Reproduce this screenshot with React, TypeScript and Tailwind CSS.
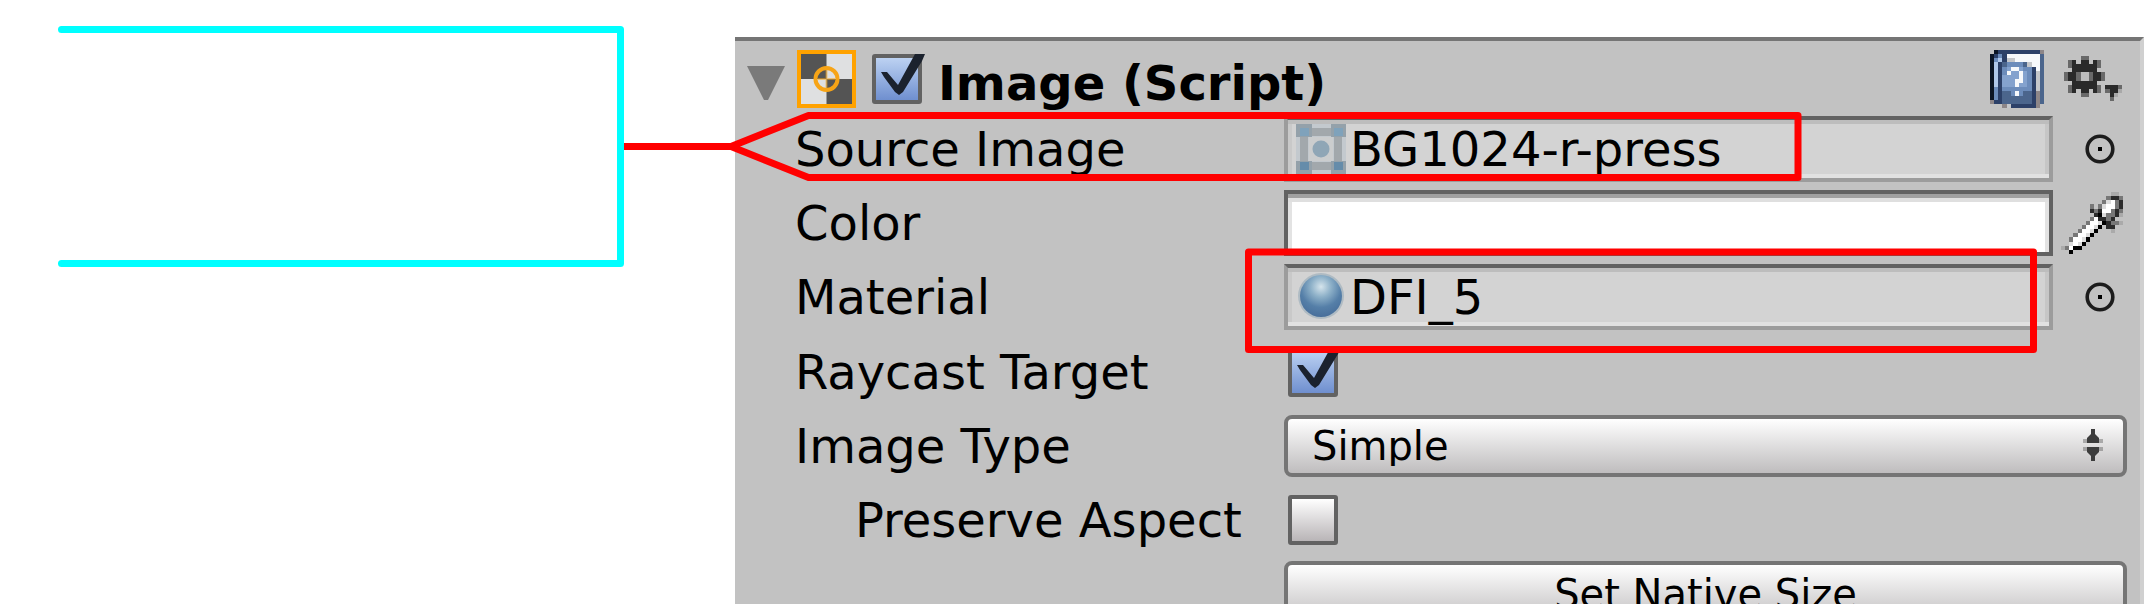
import React from 'react';

const GEAR = [
  '....mm........',
  '.md.dd.dm.....',
  '.mddddddm.....',
  '..dddddd......',
  'mddmggmddm....',
  'mddmggmddm....',
  '..dddddd......',
  '.mddddddm.dddm',
  '.md.dd.dm.mddl',
  '....mm.....dl.',
  '...........m..',
];
const GEAR_COLORS: Record<string, string> = { d: '#2a2a2a', m: '#696969', l: '#a8a8a8', g: '#bdbdbd' };

const DROPPER = [
  '............ll.',
  '...........mddm',
  '..........mgwmd',
  '.......m.mgwwmd',
  '.......dmdwwmdm',
  '........dkgmmdl',
  '.......mwddmd..',
  '......mwwgkdmml',
  '.....mwwgk.dd..',
  '....mwwgk...l..',
  '...mwwgk.......',
  '..mwwgk........',
  '..gwgk.........',
  'lmwkk..........',
  '..k............',
];
const DROPPER_COLORS: Record<string, string> = { d: '#2b2b2b', k: '#000000', m: '#777777', l: '#aaaaaa', g: '#dcdcdc', w: '#ffffff' };

const BOOK = [
  '.knnnnnnnnnnh',
  'knbnwwwwwwwwe',
  'kbcnggwwwwwwe',
  'kcnebbbbegwwe',
  'kcnblwwlbbnwe',
  'kcnbwllwlbnge',
  'kcnllllwlbnge',
  'kcnlllwwlbnge',
  'kcnlllwllbnge',
  'kbnbbbbbbbnge',
  'kbneebwbeenhe',
  'kbneeeeeeenhe',
  'hnneeeeeeenhe',
  '...hgnnnnnnh.',
];
const BOOK_COLORS: Record<string, string> = {
  k: '#0c1524',
  n: '#2c4068',
  e: '#4b658c',
  b: '#6c8cbb',
  l: '#84a2ce',
  c: '#b0c8ea',
  w: '#f6f8fb',
  g: '#c4c6ca',
  h: '#8d8688',
};

function PixelIcon({ rows, colors, className }: { rows: string[]; colors: Record<string, string>; className: string }) {
  return (
    <svg
      className={className}
      viewBox={`0 0 ${rows[0].length} ${rows.length}`}
      preserveAspectRatio="none"
      shapeRendering="crispEdges"
      aria-hidden="true"
    >
      {rows.flatMap((row, y) =>
        row
          .split('')
          .map((c, x) => (colors[c] ? <rect key={`${x}-${y}`} x={x} y={y} width="1" height="1" fill={colors[c]} /> : null)),
      )}
    </svg>
  );
}

function Checkbox({ id, label, checked }: { id: string; label?: string; checked?: boolean }) {
  return (
    <span className="relative block h-[50px] w-[50px] shrink-0">
      <input
        id={id}
        type="checkbox"
        aria-label={label}
        defaultChecked={checked}
        className="peer block h-full w-full appearance-none rounded-[3px] border-4 border-[#626262] bg-linear-to-b from-white to-[#b9b5b7] checked:from-[#bdd2f2] checked:to-[#6f8fcf]"
      />
      <svg
        className="pointer-events-none absolute inset-0 hidden overflow-visible peer-checked:block"
        viewBox="0 0 50 50"
        aria-hidden="true"
      >
        <path d="M9 18H15L26 31L43 0H53L50 7L31 38L27 41L23 38L12 23Z" fill="#1b222e" />
      </svg>
    </span>
  );
}

function TargetButton({ label }: { label: string }) {
  return (
    <button type="button" aria-label={label} className="mr-3">
      <svg className="block h-[30px] w-[30px]" viewBox="0 0 30 30" aria-hidden="true">
        <circle cx="15" cy="15" r="12.8" fill="none" stroke="#1c1c1c" strokeWidth="3.6" />
        <rect x="13" y="13" width="4" height="4" fill="#000" />
      </svg>
    </button>
  );
}

function SpriteIcon() {
  return (
    <svg className="h-[50px] w-[50px] shrink-0" viewBox="0 0 50 50" aria-hidden="true">
      <rect width="50" height="50" fill="#c3c9ce" />
      <path d="M8 4V46M42 4V46M4 8H46M4 42H46" stroke="#a2a8ac" strokeWidth="8" />
      <rect x="13" y="13" width="24" height="24" fill="#cbcdce" />
      <g fill="#94a1aa">
        <rect width="16" height="13" />
        <rect x="35" width="15" height="13" />
        <rect y="37" width="16" height="13" />
        <rect x="35" y="37" width="15" height="13" />
      </g>
      <g fill="#7fa2bb">
        <rect x="4" y="4" width="9" height="8" />
        <rect x="38" y="4" width="9" height="8" />
      </g>
      <g fill="#658caa">
        <rect x="4" y="38" width="9" height="8" />
        <rect x="38" y="38" width="9" height="8" />
      </g>
      <circle cx="25" cy="25" r="8.5" fill="#8fa6b6" />
    </svg>
  );
}

function SphereIcon() {
  return (
    <svg className="h-[50px] w-[50px] shrink-0" viewBox="0 0 50 50" aria-hidden="true">
      <defs>
        <radialGradient id="sphere" cx="0.5" cy="0.28" r="0.7">
          <stop offset="0" stopColor="#d5e4ec" />
          <stop offset="0.35" stopColor="#8db0c8" />
          <stop offset="0.7" stopColor="#557fa8" />
          <stop offset="1" stopColor="#49709c" />
        </radialGradient>
      </defs>
      <circle cx="25" cy="24" r="23" fill="#9fb0bc" opacity="0.7" />
      <circle cx="25" cy="24" r="21" fill="url(#sphere)" />
    </svg>
  );
}

function ObjectField({ id, value, icon }: { id: string; value: string; icon: React.ReactNode }) {
  return (
    <div className="flex h-[66px] items-center border-4 border-[#9c9c9c] border-t-[#626262] bg-[#d3d3d3] pl-2 shadow-[inset_0_4px_0_#bdbdbd,inset_0_-4px_0_#e1e1e1,inset_4px_0_0_#c9c9c9,inset_-4px_0_0_#c6c6c6]">
      {icon}
      <input id={id} readOnly defaultValue={value} className="ml-1 min-w-0 flex-1 bg-transparent outline-none" />
    </div>
  );
}

function Row({ id, label, indent, action, children }: {
  id: string;
  label: string;
  indent?: boolean;
  action?: React.ReactNode;
  children: React.ReactNode;
}) {
  return (
    <div className="grid h-[66px] grid-cols-[489px_1fr] items-center">
      <label htmlFor={id} className={indent ? 'pl-[60px] whitespace-nowrap' : 'whitespace-nowrap'}>
        {label}
      </label>
      <div className="flex min-w-0 items-center">
        <div className="min-w-0 flex-1">{children}</div>
        {action && <div className="flex w-[74px] justify-end">{action}</div>}
      </div>
    </div>
  );
}

function Annotations() {
  return (
    <svg
      className="pointer-events-none absolute top-0 left-0 h-[604px] w-[2144px]"
      viewBox="0 0 2144 604"
      fill="none"
      strokeLinejoin="round"
      strokeLinecap="round"
      strokeWidth="7"
      aria-hidden="true"
    >
      <g stroke="#ff0000">
        <path d="M624 146.500H731" strokeLinecap="butt" />
        <path d="M731 146.500L808.500 115.500H1798V177.500H808.500Z" />
        <path d="M1248.500 252H2033.500V349.500H1248.500Z" />
      </g>
      <path d="M61.500 29.500H620.500V263.500H61.500" stroke="#00ffff" />
    </svg>
  );
}

export default function App() {
  return (
    <main className="relative flex h-screen overflow-hidden bg-white pt-[37px] font-['DejaVu_Sans',Verdana,sans-serif] text-[48px] leading-none text-black">
      <div className="w-[735px] shrink-0" />
      <section className="min-w-0 flex-1 border-t-4 border-r-4 border-t-[#757575] border-r-[#d0d0d0] bg-[#c2c2c2]">
        <header className="flex h-[75px] items-center pr-[18px] pl-3">
          <button type="button" aria-label="Collapse component" className="mr-3 pt-2">
            <svg className="block h-[34px] w-[38px]" viewBox="0 0 38 34" aria-hidden="true">
              <path d="M0 0H38L21 34H17Z" fill="#7a7a7a" />
            </svg>
          </button>
          <svg className="mr-4 h-[58px] w-[59px]" viewBox="0 0 59 58" aria-hidden="true">
            <rect x="2" y="2" width="55" height="54" fill="#dfe0e1" />
            <path d="M4 4H29.500V29H4ZM29.500 29H55V54H29.500Z" fill="#545454" />
            <circle cx="29.500" cy="29" r="11" fill="none" stroke="#f7a416" strokeWidth="4" />
            <path d="M29.500 20V38M21 29H38" stroke="#f7a416" strokeWidth="2" opacity="0.5" />
            <rect x="2" y="2" width="55" height="54" fill="none" stroke="#ffa200" strokeWidth="4" />
          </svg>
          <Checkbox id="enabled" label="Enable Image component" checked />
          <h1 className="ml-4 flex-1 pt-2 font-bold whitespace-nowrap">Image (Script)</h1>
          <button type="button" aria-label="Open reference">
            <PixelIcon rows={BOOK} colors={BOOK_COLORS} className="block h-[58px] w-[54px]" />
          </button>
          <button type="button" aria-label="Component settings" className="ml-5">
            <PixelIcon rows={GEAR} colors={GEAR_COLORS} className="block h-[45px] w-[58px]" />
          </button>
        </header>

        <div className="space-y-2 pr-[13px] pl-[60px]">
          <Row id="source" label="Source Image" action={<TargetButton label="Pick source image" />}>
            <ObjectField id="source" value="BG1024-r-press" icon={<SpriteIcon />} />
          </Row>
          <Row
            id="color"
            label="Color"
            action={
              <button type="button" aria-label="Pick color from screen" className="mr-1">
                <PixelIcon rows={DROPPER} colors={DROPPER_COLORS} className="block h-[62px] w-[62px]" />
              </button>
            }
          >
            <button
              id="color"
              type="button"
              className="block h-[66px] w-full border-4 border-[#626262] bg-white shadow-[inset_0_4px_0_#a0a0a0,inset_0_8px_0_#dfdfdf,inset_4px_0_0_#e3e3e3,inset_-4px_0_0_#e3e3e3]"
            />
          </Row>
          <Row id="material" label="Material" action={<TargetButton label="Pick material" />}>
            <ObjectField id="material" value="DFI_5" icon={<SphereIcon />} />
          </Row>
        </div>

        <div className="mt-[9px] space-y-2 pr-[13px] pl-[60px]">
          <Row id="raycast" label="Raycast Target">
            <div className="pl-1">
              <Checkbox id="raycast" checked />
            </div>
          </Row>
          <Row id="type" label="Image Type">
            <div className="relative">
              <select
                id="type"
                className="block h-[62px] w-full appearance-none rounded-lg border-4 border-[#757575] bg-linear-to-b from-white to-[#bfbdbe] pl-6 text-[40px] leading-none"
              >
                <option>Simple</option>
                <option>Sliced</option>
                <option>Tiled</option>
                <option>Filled</option>
              </select>
              <svg
                className="pointer-events-none absolute top-3 right-6 h-9 w-5"
                viewBox="0 0 20 36"
                aria-hidden="true"
              >
                <path d="M8 2H12V7L16 11V16H4V11L8 7ZM8 34H12V29L16 25V20H4V25L8 29Z" fill="#3c3c3c" />
                <path d="M0 12H20V16H0ZM0 20H20V24H0Z" fill="#3c3c3c" opacity="0.35" />
              </svg>
            </div>
          </Row>
          <Row id="preserve" label="Preserve Aspect" indent>
            <div className="pl-1">
              <Checkbox id="preserve" />
            </div>
          </Row>
          <div className="pl-[489px]">
            <button
              type="button"
              className="block h-[66px] w-full rounded-lg border-4 border-[#757575] bg-linear-to-b from-white to-[#bfbdbe] text-[40px] leading-none"
            >
              Set Native Size
            </button>
          </div>
        </div>
      </section>
      <Annotations />
    </main>
  );
}
